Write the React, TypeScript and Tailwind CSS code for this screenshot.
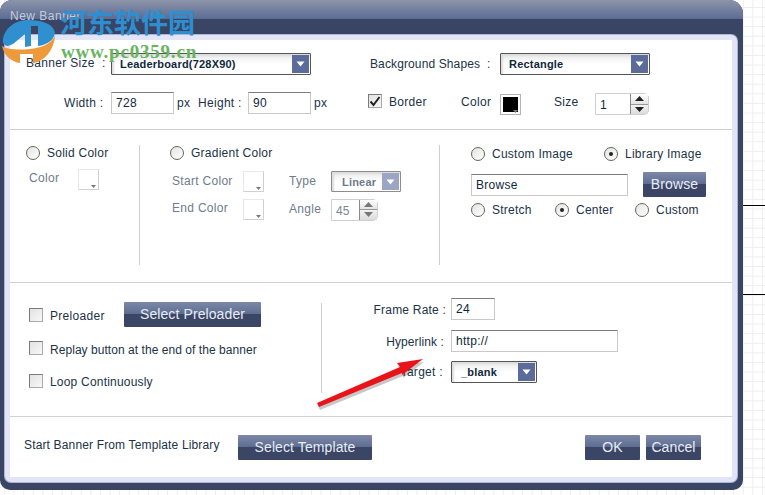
import React from "react";

const font = "font-['Liberation_Sans',Arial,sans-serif]";

function Chevron({ light }: { light?: boolean }) {
  return (
    <span className={`flex h-full w-[17px] items-center justify-center ${light ? "bg-[#9ca5c4]" : "bg-[#5b6b9a]"}`}>
      <svg width="9" height="6" viewBox="0 0 9 6"><path d="M0.5 0.5h8L4.5 5.5z" fill="#fff" /></svg>
    </span>
  );
}

function Select({ w, h = 22, text, mx = 7, disabled }: { w: number; h?: number; text: string; mx?: number; disabled?: boolean }) {
  return (
    <div
      style={{ width: w, height: h }}
      className={`flex shrink-0 items-center justify-between rounded-[1px] border bg-gradient-to-b from-[#e9e9e9] via-white to-white p-px shadow-[inset_2px_2px_2px_#ddd] ${disabled ? "border-[#8d8d8d]" : "border-[#555]"}`}
    >
      <span style={{ marginLeft: mx }} className={`pt-px text-[11px] font-bold tracking-[0.2px] ${disabled ? "text-[#6d7a8a]" : "text-[#10283c]"}`}>{text}</span>
      <Chevron light={disabled} />
    </div>
  );
}

function Input({ w, text, h = 22 }: { w: number; text: string; h?: number }) {
  return (
    <div style={{ width: w, height: h }} className="flex shrink-0 items-center border border-[#c9c9c9] border-t-[#7d7d7d] bg-white pl-1 text-[12px] tracking-[0.3px] text-[#10283c]">
      {text}
    </div>
  );
}

function Swatch({ dark, w = 21 }: { dark?: boolean; w?: number }) {
  return (
    <div style={{ width: w }} className={`relative h-[21px] shrink-0 border ${dark ? "border-[#b4b4b4] p-[2px]" : "border-[#d0d0d0] border-t-[#e8e8e8] border-l-[#e8e8e8]"} bg-white`}>
      {dark && <div className="h-full w-full bg-black" />}
      <svg className="absolute bottom-[1px] right-[2px]" width="5" height="3" viewBox="0 0 5 3"><path d="M0 0h5L2.5 3z" fill="#777" /></svg>
    </div>
  );
}

function Stepper({ w, text, muted }: { w: number; text: string; muted?: boolean }) {
  return (
    <div style={{ width: w }} className="flex h-[22px] shrink-0 rounded-r-[5px] border border-[#cfcfcf] bg-white">
      <span className={`flex-1 self-center pl-1 pt-[2px] text-[12px] ${muted ? "text-[#7c8794]" : "text-[#10283c]"}`}>{text}</span>
      <div className="flex w-[18px] flex-col border-l border-[#8a8a8a]">
        <span className="flex flex-1 items-center justify-center border-b border-[#999] bg-gradient-to-b from-white to-[#e4e4e4]">
          <svg width="9" height="5" viewBox="0 0 9 5"><path d="M0 5h9L4.5 0z" fill={muted ? "#777" : "#222"} /></svg>
        </span>
        <span className="flex flex-1 items-center justify-center bg-gradient-to-b from-[#f2f2f2] to-[#dcdcdc]">
          <svg width="9" height="5" viewBox="0 0 9 5"><path d="M0 0h9L4.5 5z" fill={muted ? "#777" : "#222"} /></svg>
        </span>
      </div>
    </div>
  );
}

function Radio({ checked }: { checked?: boolean }) {
  return (
    <span className="flex h-[14px] w-[14px] shrink-0 items-center justify-center rounded-full border border-[#5f6b55] bg-gradient-to-br from-[#e4e4e4] to-white">
      {checked && <span className="h-[4px] w-[4px] rounded-full bg-[#222]" />}
    </span>
  );
}

function Check({ checked }: { checked?: boolean }) {
  return (
    <span className="flex h-[14px] w-[14px] shrink-0 items-center justify-center border border-[#7a7a7a] border-r-[#aaa] border-b-[#aaa] bg-gradient-to-br from-[#e2e2e2] to-[#f8f8f8]">
      {checked && (
        <svg width="12" height="11" viewBox="0 0 12 11"><path d="M1.5 5.5 4.5 9 10.5 1" fill="none" stroke="#222" strokeWidth="2" /></svg>
      )}
    </span>
  );
}

function Btn({ w, text, h = 25 }: { w: number; text: string; h?: number }) {
  return (
    <div style={{ width: w, height: h }} className="flex shrink-0 items-center justify-center rounded-[1px] bg-[linear-gradient(#7d88a7_0%,#5d6d92_48%,#3b4667_50%,#3b4667_100%)] pb-px text-[14px] tracking-[0.1px] text-[#e8ecf4]">
      {text}
    </div>
  );
}

const B = "text-[12px] text-[#1b3247] whitespace-nowrap";
const L = `${B} tracking-[0.3px]`;
const M = "text-[12px] tracking-[0.3px] text-[#6f7c8b] whitespace-nowrap";

function RadioLabel({ text, checked, w }: { text: string; checked?: boolean; w?: number }) {
  return (
    <div style={{ width: w }} className="flex items-center gap-[7px]">
      <Radio checked={checked} />
      <span className={`${B} pt-px tracking-[0.25px]`}>{text}</span>
    </div>
  );
}

export default function App() {
  return (
    <div className={`relative h-[495px] w-[765px] overflow-hidden bg-white bg-[linear-gradient(#eeeeee_1px,transparent_1px),linear-gradient(90deg,#eeeeee_1px,transparent_1px)] bg-[size:9.6px_9.6px] bg-[position:4px_7px] ${font}`}>
      <div className="absolute left-[743px] top-[205px] h-px w-[22px] bg-black" />
      <div className="absolute left-[743px] top-[294px] h-px w-[22px] bg-black" />

      <div className="flex h-[490px] w-[743px] flex-col rounded-b-[10px] rounded-tl-[12px] rounded-tr-[14px] bg-[#3a4565] pb-[8px] pl-[5px] pr-[6px]">
        <div className="-ml-[5px] -mr-[6px] h-[19px] shrink-0 rounded-tl-[12px] rounded-tr-[14px] bg-gradient-to-b from-[#8d94aa] to-[#5b6c93]" />
        <div className="-ml-[5px] flex h-[16px] shrink-0 items-start pl-[10px]">
          <span className="-mt-[12px] text-[12px] tracking-[0.5px] text-[#c3cadd]">New Banner</span>
        </div>

        <div className="flex flex-1 flex-col rounded-[6px] border-[5px] border-[#e2e4f7] bg-white ring-1 ring-[#aeb4d4]">
          {/* top */}
          <div className="flex h-[90px] shrink-0 flex-col border-b border-[#cfcfcf] pl-[16px] pt-[13px]">
            <div className="flex h-[22px] items-center">
              <span className={`${L} -mt-[2px] w-[85px]`}>Banner Size&nbsp;&nbsp;:</span>
              <Select w={200} text="Leaderboard(728X90)" />
              <span className={`${B} -mt-px ml-[59px] w-[130px] tracking-[0.12px]`}>Background Shapes&nbsp;&nbsp;:</span>
              <Select w={150} text="Rectangle" />
            </div>
            <div className="mt-[17px] flex h-[22px] items-center">
              <span className={`${L} w-[75px] pl-[38px]`}>Width :</span>
              <div className="ml-[10px]"><Input w={63} text="728" /></div>
              <span className={`${L} ml-[3px] w-[21px]`}>px</span>
              <span className={`${L} w-[50px]`}>Height :</span>
              <Input w={63} text="90" />
              <span className={`${L} ml-[3px] w-[54px]`}>px</span>
              <div className="-mt-[4px] flex"><Check checked /></div>
              <span className={`${L} -mt-[2px] ml-[7px] w-[72px]`}>Border</span>
              <span className={`${L} -mt-[2px] w-[39px]`}>Color</span>
              <div className="mt-[2px]"><Swatch dark /></div>
              <span className={`${L} -mt-[2px] ml-[33px] w-[41px]`}>Size</span>
              <div className="mt-[2px]"><Stepper w={54} text="1" /></div>
            </div>
          </div>

          {/* middle */}
          <div className="flex h-[153px] shrink-0 border-b border-[#cfd3d3] pt-[15px]">
            <div className="ml-[16px] h-[120px] w-[114px] shrink-0 border-r border-[#cfcfcf]">
              <div className="-mt-[2px]"><RadioLabel text="Solid Color" /></div>
              <div className="mt-[7px] flex items-center">
                <span className={`${M} -mt-[3px] ml-[3px] w-[49px]`}>Color</span>
                <Swatch />
              </div>
            </div>
            <div className="h-[120px] w-[300px] shrink-0 border-r border-[#cfcfcf] pl-[30px]">
              <div className="-mt-[2px]"><RadioLabel text="Gradient Color" /></div>
              <div className="mt-[9px] flex h-[21px] items-center">
                <span className={`${M} -mt-[2px] ml-[2px] w-[71px]`}>Start Color</span>
                <Swatch />
                <span className={`${M} -mt-[2px] ml-[25px] w-[42px]`}>Type</span>
                <Select w={70} h={21} text="Linear" mx={9} disabled />
              </div>
              <div className="mt-[7px] flex h-[21px] items-center">
                <span className={`${M} -mt-[3px] ml-[2px] w-[71px]`}>End Color</span>
                <Swatch />
                <span className={`${M} -mt-[2px] ml-[25px] w-[42px]`}>Angle</span>
                <Stepper w={47} text="45" muted />
              </div>
            </div>
            <div className="ml-[31px] flex w-[240px] flex-col">
              <div className="-mt-px flex">
                <RadioLabel text="Custom Image" w={133} />
                <RadioLabel text="Library Image" checked />
              </div>
              <div className="mt-[9px] flex items-center">
                <Input w={157} text="Browse" />
                <div className="ml-[15px]"><Btn w={63} text="Browse" /></div>
              </div>
              <div className="mt-[3px] flex">
                <RadioLabel text="Stretch" w={84} />
                <RadioLabel text="Center" checked w={80} />
                <RadioLabel text="Custom" />
              </div>
            </div>
          </div>

          {/* lower */}
          <div className="flex h-[134px] shrink-0 border-b border-[#cfd3d3]">
            <div className="ml-[19px] flex w-[292px] shrink-0 flex-col pt-[19px]">
              <div className="flex h-[25px] items-center">
                <Check />
                <span className={`${L} ml-[7px] w-[74px] pt-[2px]`}>Preloader</span>
                <Btn w={137} text="Select Preloader" />
              </div>
              <div className="mt-[13px] flex h-[16px] items-center">
                <Check />
                <span className={`${B} ml-[7px] pt-[3px] tracking-[0.05px]`}>Replay button at the end of the banner</span>
              </div>
              <div className="mt-[17px] flex h-[16px] items-center">
                <Check />
                <span className={`${B} ml-[7px] pt-[2px] tracking-[0.2px]`}>Loop Continuously</span>
              </div>
            </div>
            <div className="mt-[20px] h-[90px] w-[2px] shrink-0 border-l border-[#cfcfcf]" />
            <div className="ml-[2px] flex flex-col pt-[15px]">
              <div className="flex h-[22px] items-center">
                <span className={`${B} w-[123px] pr-[2px] pt-[2px] text-right tracking-[0.2px]`}>Frame Rate :</span>
                <div className="ml-[3px]"><Input w={44} text="24" /></div>
              </div>
              <div className="mt-[10px] flex h-[22px] items-center">
                <span className={`${B} w-[123px] pr-[4px] pt-px text-right tracking-[0.1px]`}>Hyperlink :</span>
                <div className="ml-[3px]"><Input w={167} text="http://" /></div>
              </div>
              <div className="mt-[9px] flex h-[22px] items-center">
                <span className={`${L} w-[123px] pr-[5px] text-right`}>Target :</span>
                <div className="ml-[3px]"><Select w={86} text="_blank" mx={8} /></div>
              </div>
            </div>
          </div>

          {/* bottom */}
          <div className="flex flex-1 items-start pl-[14px] pt-[18px]">
            <span className={`${B} mt-[1px] w-[214px] tracking-[0.15px]`}>Start Banner From Template Library</span>
            <Btn w={134} text="Select Template" />
            <div className="ml-[213px]"><Btn w={55} text="OK" /></div>
            <div className="ml-[6px]"><Btn w={55} text="Cancel" /></div>
          </div>
        </div>
      </div>

      {/* arrow annotation */}
      <svg className="absolute left-[310px] top-[350px]" width="120" height="65" viewBox="0 0 120 65">
        <path d="M7 53 L90 17 L87 13 L113 9 L92 25 L92 23 L9 57z" fill="#000" opacity="0.22" transform="translate(1 3)" />
        <path d="M7 53 L90 17 L87 13 L113 9 L92 25 L92 23 L9 57z" fill="#e8141a" />
      </svg>

      {/* watermark */}
      <svg className="absolute left-0 top-[18px]" width="58" height="46" viewBox="0 0 58 46">
        <path d="M30 31C18 32 8 32 2 28C4 38 12 44 20 45L20 36L33 36L33 45C44 44 54 32 55 18C50 27 40 30 30 31z" fill="#ef9a3a" />
        <path d="M3 25C2 12 14 2 28 2C42 2 54 6 55 15C54 22 47 27 38 28L38 8L31 8L31 28L25 29L25 16L13 26L8 28C6 28 4 27 3 25z" fill="#2f8fcf" />
      </svg>
      <div className="absolute left-[60px] top-[7px] font-['Noto_Sans_CJK_SC',sans-serif] text-[27px] font-bold leading-[30px] text-[#2e8fd0]">河东软件园</div>
      <div className="absolute left-[61px] top-[43px] font-['Liberation_Serif',serif] text-[19px] font-bold leading-[18px] tracking-[0.8px] text-[#68b35f]">www.pc0359.cn</div>
    </div>
  );
}
